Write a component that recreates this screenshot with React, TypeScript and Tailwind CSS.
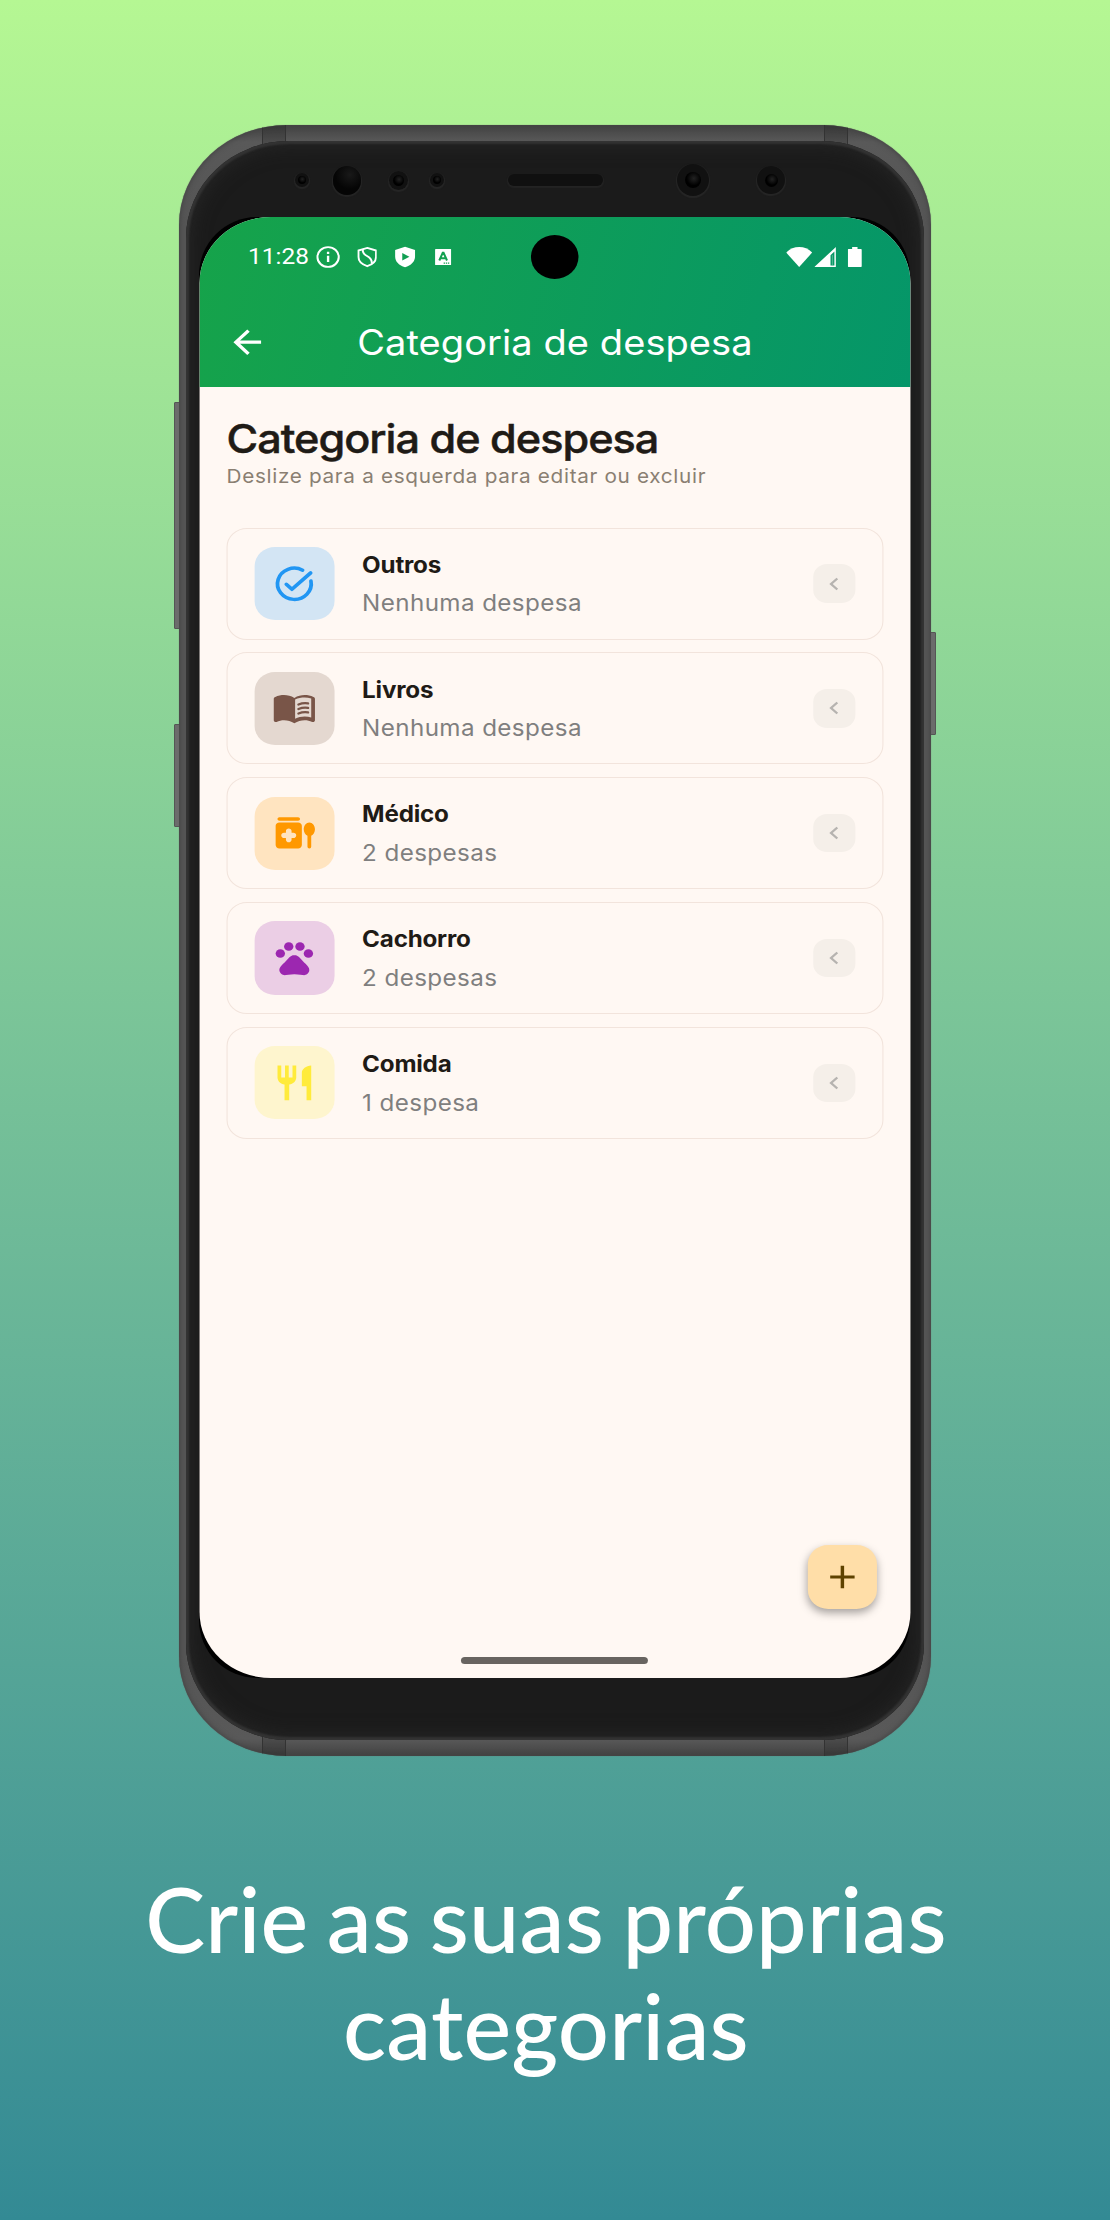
import type { ReactNode } from "react";
import { MdOutlineArrowBack } from "react-icons/md";

type Category = { name: string; count: string; chip: string; icon: ReactNode };

const svg = "size-[41.6px]";

const categories: Category[] = [
  {
    name: "Outros",
    count: "Nenhuma despesa",
    chip: "bg-[#d3e5f4] text-[#2196f3]",
    icon: (
      <svg viewBox="0 0 24 24" className={svg} fill="none" stroke="currentColor" strokeWidth="2" strokeLinecap="round" strokeLinejoin="round">
        <path d="M16.400 4.150A9 9 0 1 0 20.850 10.400" />
        <path d="M7.700 12.300l3 2.900L20.700 5.700" />
      </svg>
    ),
  },
  {
    name: "Livros",
    count: "Nenhuma despesa",
    chip: "bg-[#e4d8d0] text-[#795548]",
    icon: (
      <svg viewBox="0 0 24 24" className={svg} fill="currentColor">
        <path
          fillRule="evenodd"
          d="M12 5.700C10.200 4.600 8.400 4.100 6.500 4.100c-1.600 0-3.200.35-4.700 1.050-.5.230-.8.600-.8 1.150v12.300c0 .8.800 1.300 1.500.95 1.300-.6 2.600-.9 4-.9 2 0 3.700.55 5.500 1.700 1.800-1.150 3.500-1.700 5.500-1.700 1.400 0 2.700.3 4 .9.700.35 1.500-.15 1.500-.95V6.300c0-.55-.3-.92-.8-1.150-1.500-.7-3.100-1.050-4.700-1.050-1.900 0-3.700.5-5.500 1.600zM12.400 6.700c1.600-.8 3.300-1.150 5.100-1.150 1.200 0 2.300.18 3.500.55v10.900c-1.100-.35-2.300-.5-3.500-.5-1.800 0-3.500.4-5.100 1.300z"
        />
        <g fill="none" stroke="currentColor" strokeWidth="1.300" strokeLinecap="round">
          <path d="M14.200 9.500c1.700-.7 3.500-.9 5.100-.6M14.200 12.100c1.700-.7 3.500-.9 5.100-.6M14.200 14.700c1.700-.7 3.500-.9 5.100-.6" />
        </g>
      </svg>
    ),
  },
  {
    name: "Médico",
    count: "2 despesas",
    chip: "bg-[#ffe4c0] text-[#ff9800]",
    icon: (
      <svg viewBox="0 0 24 24" className={svg} fill="currentColor">
        <path d="M4 3h10c.55 0 1 .45 1 1s-.45 1-1 1H4c-.55 0-1-.45-1-1s.45-1 1-1z" />
        <path
          fillRule="evenodd"
          d="M4 6h10c1.100 0 2 .9 2 2v11c0 1.100-.9 2-2 2H4c-1.100 0-2-.9-2-2V8c0-1.100.9-2 2-2zM11.500 12h-1v-1c0-.83-.67-1.500-1.500-1.500S7.500 10.170 7.500 11v1h-1C5.670 12 5 12.670 5 13.500S5.670 15 6.500 15h1v1c0 .83.67 1.500 1.500 1.500s1.500-.67 1.500-1.500v-1h1c.83 0 1.500-.67 1.500-1.500S12.330 12 11.500 12z"
        />
        <path d="M23 10c0-2.200-1.340-4-3-4s-3 1.800-3 4c0 1.700.8 3.100 2 3.700V20a1 1 0 0 0 2 0v-6.300c1.200-.6 2-2 2-3.700z" />
      </svg>
    ),
  },
  {
    name: "Cachorro",
    count: "2 despesas",
    chip: "bg-[#ebcee5] text-[#9c27b0]",
    icon: (
      <svg viewBox="0 0 24 24" className={svg} fill="currentColor">
        <circle cx="4.500" cy="9.500" r="2.500" />
        <circle cx="9" cy="5.500" r="2.500" />
        <circle cx="15" cy="5.500" r="2.500" />
        <circle cx="19.500" cy="9.500" r="2.500" />
        <path d="M17.340 14.860c-.87-1.020-1.600-1.890-2.480-2.910-.46-.54-1.050-1.080-1.750-1.320-.11-.04-.22-.07-.33-.09-.25-.04-.52-.04-.78-.04s-.53 0-.79.050c-.11.020-.22.050-.33.090-.7.240-1.280.780-1.750 1.320-.87 1.020-1.600 1.890-2.480 2.910-1.310 1.310-2.920 2.760-2.620 4.790.290 1.020 1.020 2.030 2.330 2.320.730.150 3.060-.44 5.540-.44h.18c2.480 0 4.810.580 5.540.440 1.310-.29 2.040-1.310 2.330-2.320.310-2.040-1.300-3.490-2.610-4.800z" />
      </svg>
    ),
  },
  {
    name: "Comida",
    count: "1 despesa",
    chip: "bg-[#fef5ce] text-[#ffeb3b]",
    icon: (
      <svg viewBox="0 0 24 24" className={svg} fill="currentColor">
        <path d="M11 9H9V2H7v7H5V2H3v7c0 2.120 1.660 3.840 3.750 3.970V22h2.500v-9.030C11.340 12.840 13 11.120 13 9V2h-2v7zm5-3v8h2.500v8H21V2c-2.760 0-5 2.240-5 4z" />
      </svg>
    ),
  },
];

function StatusBar() {
  return (
    <div className="flex h-[77px] items-center pl-[45px] pr-[45px] pt-[4px]">
      <span className="font-[Roboto] text-[22.600px] leading-none">11:28</span>
      <svg viewBox="0 0 22 22" className="ml-[7px] size-[22px]" fill="none" stroke="currentColor">
        <circle cx="11" cy="11" r="9.900" strokeWidth="1.900" />
        <path d="M11 9.700v6.200M11 5.700v2.200" strokeWidth="2.200" />
      </svg>
      <svg viewBox="0 0 20 22" className="ml-[15.500px] h-[22px] w-[18.500px]" fill="none" stroke="currentColor" strokeWidth="2">
        <path d="M10 1.200L18.800 4v7c0 4.300-3.700 8-8.800 9.900C4.900 19 1.200 15.300 1.200 11V4z" />
        <path d="M5.500 2.800c-.3 3.700 1 5.200 4.300 7.200 3.500 2.200 5.200 4.300 4.700 8" />
      </svg>
      <svg viewBox="0 0 20 22" className="ml-[17px] h-[22px] w-[18.500px]" fill="currentColor">
        <path fillRule="evenodd" d="M10 0L20 3.500v7C20 16 16 20.200 10 22 4 20.200 0 16 0 10.500v-7zM7.200 6.800v8l7.200-4z" />
      </svg>
      <svg viewBox="0 0 16 16" className="ml-[18px] h-[16px] w-[15px]" preserveAspectRatio="none">
        <rect width="16" height="16" rx=".6" fill="currentColor" />
        <path d="M4.200 11.500L7.600 3.800h.8l3.400 7.700M5.600 9.300h5" fill="none" stroke="#13a150" strokeWidth="2" />
        <path d="M8.500 14.200h6" stroke="#13a150" strokeWidth="1.200" strokeDasharray="1.300 .8" />
      </svg>
      <svg viewBox="0 0 24 20" className="ml-auto h-[20px] w-[24px]" fill="currentColor">
        <path d="M0 5.600C3.500 1.800 7.500 0 12 0s8.500 1.800 12 5.600L12 20z" />
      </svg>
      <svg viewBox="0 0 20 20" className="ml-[2px] size-[20px]" fill="currentColor">
        <path fillRule="evenodd" d="M20 0v20H0zM18.600 4.500L15 8.200v10.300h3.600z" />
        <path d="M16.300 8h.9v10h-.9z" opacity=".3" />
      </svg>
      <svg viewBox="0 0 13 20" className="ml-[11px] h-[20px] w-[13px]" fill="currentColor">
        <path d="M4 0h5v2h3c.6 0 1 .4 1 1v16c0 .6-.4 1-1 1H1c-.6 0-1-.4-1-1V3c0-.6.4-1 1-1h3z" />
      </svg>
    </div>
  );
}

function CategoryCard({ name, count, chip, icon }: Category) {
  return (
    <li className="flex h-[111.900px] items-center rounded-[19px] border border-[#f2e4dc] px-[25px]">
      <div className={`flex h-[73.400px] w-[73.500px] items-center justify-center rounded-[19px] ${chip}`}>{icon}</div>
      <div className="ml-[26px] flex flex-col gap-[8.500px] pt-px">
        <span className="text-[22.400px] font-bold leading-[30px] tracking-[-0.200px] text-[#1f1b16]">{name}</span>
        <span className="text-[22.400px] leading-[30px] tracking-[0.370px] text-[#7f7f7f]">{count}</span>
      </div>
      <div className="ml-auto flex h-[38.400px] w-[38.800px] items-center justify-center rounded-[13px] bg-[#f5efe9] text-[#b6b3b0]">
        <svg viewBox="0 0 12 14" className="h-[14px] w-[12px]" fill="none" stroke="currentColor" strokeWidth="2.200">
          <path d="M9.300 1.500L3.500 7l5.800 5.500" />
        </svg>
      </div>
    </li>
  );
}

/* The app is laid out at its native aspect and widened to fill the bezel */
function AppScreen() {
  return (
    <div className="relative flex h-[1461px] w-[657.500px] origin-top-left translate-x-[0.500px] scale-x-[1.0805] flex-col overflow-hidden rounded-[66px] bg-[#fff8f3] font-[Inter,sans-serif]">
      <header className="h-[170px] bg-linear-[104deg,#16a34a,#059669] text-white">
        <StatusBar />
        <div className="flex h-[97px] items-center pl-[25px] pr-[27px]">
          <MdOutlineArrowBack className="size-[38.400px]" />
          <h1 className="flex-1 pr-[36px] text-center text-[35.200px] leading-none tracking-[0.060px]">Categoria de despesa</h1>
        </div>
      </header>
      <main className="flex flex-1 flex-col px-[25px] pt-[29px]">
        <h2 className="whitespace-nowrap text-[40px] font-medium leading-[46px] tracking-[-0.930px] text-[#1f1b16] [-webkit-text-stroke:0.500px_#1f1b16]">Categoria de despesa</h2>
        <p className="pt-[2px] text-[19.200px] leading-[24px] tracking-[0.620px] text-[#8a7f72]">Deslize para a esquerda para editar ou excluir</p>
        <ul className="mt-[40px] flex flex-col gap-[12.900px]">
          {categories.map((c) => (
            <CategoryCard key={c.name} {...c} />
          ))}
        </ul>
      </main>
      <div className="mb-[14px] h-[6.500px] w-[173px] self-center rounded-full bg-[#686460]" />
      <div className="absolute left-1/2 top-[18px] size-[44.500px] -translate-x-1/2 rounded-full bg-black" />
      <button className="absolute bottom-[69px] right-[31px] flex size-[64px] items-center justify-center rounded-[19px] bg-[#ffdea8] text-[#5e4200] shadow-[0_4px_8px_rgba(0,0,0,0.35)]">
        <svg viewBox="0 0 24 24" className="size-[24px]" stroke="currentColor" strokeWidth="3.200">
          <path d="M12 .7v22.600M.7 12h22.600" />
        </svg>
      </button>
    </div>
  );
}

/* A round sensor in the top bezel */
function Sensor({ className, dot }: { className: string; dot: string }) {
  return (
    <div className={`flex items-center justify-center rounded-full bg-[#111] shadow-[0_1px_1px_1px_#262626] ${className}`}>
      <div className={`rounded-full bg-[radial-gradient(circle_at_55%_40%,#222,#000_55%)] ${dot}`} />
    </div>
  );
}

/* Metal rail along the short edges, with its two antenna bands */
function Rail({ className }: { className: string }) {
  return (
    <div className={`flex h-[16px] justify-between px-[83px] ${className}`}>
      <div className="h-[24px] w-[24px] border-x border-[#333] bg-black/15" />
      <div className="h-[24px] w-[24px] border-x border-[#333] bg-black/15" />
    </div>
  );
}

const sideKey = "absolute w-[9px] rounded-[1px] border border-[#555] bg-[#6b6b6b]";

function Phone() {
  return (
    <div className="relative ml-[179px] h-[1631px] w-[752px]">
      <div className={`${sideKey} -left-[5px] top-[277px] h-[227px]`} />
      <div className={`${sideKey} -left-[5px] top-[599px] h-[103px]`} />
      <div className={`${sideKey} -right-[5px] top-[507px] h-[103px]`} />
      <div className="relative flex h-full flex-col overflow-hidden rounded-[108px/100px] bg-[linear-gradient(#424242,#595959_17px,#555_100px,#555_1531px,#595959_1614px,#424242)] shadow-[0_0_1px_#666,inset_0_0_5px_1px_#444]">
        <Rail className="items-start" />
        <div className="relative mx-[7px] flex flex-1 flex-col rounded-[103px/97px] bg-[#1b1b1b] shadow-[inset_0_0_2px_3px_#333,inset_0_0_22px_#2c2c2c]">
          <div className="flex h-[75.700px] items-center pl-[109px] pt-[3px]">
            <Sensor className="size-[14px]" dot="size-[8px]" />
            <div className="ml-[23.500px] size-[28.500px] rounded-full bg-[radial-gradient(circle_at_60%_30%,#191919,#050505_55%)] shadow-[0_1px_1px_1px_#252525]" />
            <Sensor className="ml-[28px] size-[19px]" dot="size-[11px]" />
            <Sensor className="ml-[22px] size-[14px]" dot="size-[8px]" />
            <div className="ml-[64px] h-[12px] w-[94.500px] rounded-full bg-[#101010] shadow-[0_1px_1px_1px_#232323]" />
            <Sensor className="ml-[74px] size-[32px]" dot="size-[16px]" />
            <Sensor className="ml-[48.500px] size-[28px]" dot="size-[13px]" />
          </div>
          <div className="ml-[13.300px] h-[1461px] w-[711px] rounded-[58px] bg-black">
            <AppScreen />
          </div>
        </div>
        <Rail className="items-end" />
      </div>
    </div>
  );
}

export default function App() {
  return (
    <div className="flex h-[2220px] w-[1110px] flex-col overflow-hidden bg-linear-to-b from-[#b5f793] to-[#338a94] pt-[125px]">
      <Phone />
      <p className="mt-[109px] pr-[18px] text-center font-[Lato] text-[90px] font-medium leading-[107.400px] tracking-[0.200px] text-white [word-spacing:-4.500px]">
        Crie as suas próprias
        <br />
        categorias
      </p>
    </div>
  );
}
